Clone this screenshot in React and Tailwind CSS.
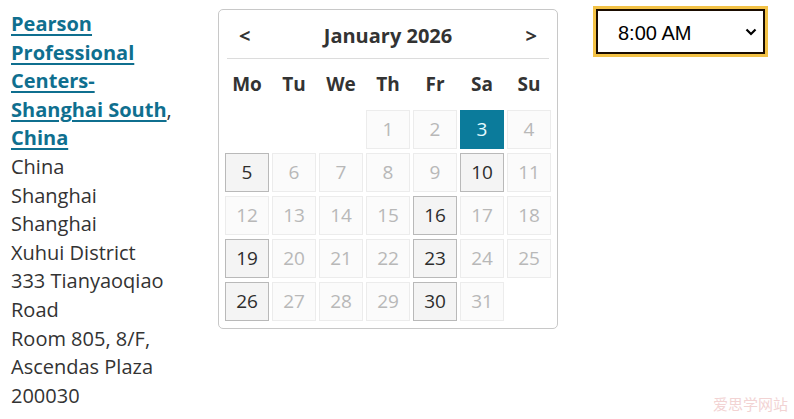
const ADDRESS = [
    'China',
    'Shanghai',
    'Shanghai',
    'Xuhui District',
    '333 Tianyaoqiao Road',
    'Room 805, 8/F, Ascendas Plaza',
    '200030',
];

const DAY_NAMES = ['Mo', 'Tu', 'We', 'Th', 'Fr', 'Sa', 'Su'];

// January 2026 starts on a Thursday -> 3 blank cells
const LEAD = 3;
const AVAILABLE = [5, 10, 16, 19, 23, 26, 30];
const SELECTED = 3;

function DayCell({ day }) {
    if (!day) return <div className="h-[39px]" />;
    if (day === SELECTED) {
        return (
            <div className="h-[39px] flex items-center justify-center bg-[#0b7b9b] text-[#e6fbff] border border-[#0b7b9b]">
                {day}
            </div>
        );
    }
    if (AVAILABLE.includes(day)) {
        return (
            <div className="h-[39px] flex items-center justify-center bg-[#f4f4f4] border border-[#b9b9b9] text-[#2d2d2d]">
                {day}
            </div>
        );
    }
    return (
        <div className="h-[39px] flex items-center justify-center bg-[#fbfbfb] border border-[#ececec] text-[#b8b8b8]">
            {day}
        </div>
    );
}

function Calendar() {
    const cells = [];
    for (let i = 0; i < LEAD; i++) cells.push(null);
    for (let d = 1; d <= 31; d++) cells.push(d);

    return (
        <div className="w-[340px] mt-[9px] rounded-[5px] border border-[#c8c8c8] px-[6px] pb-[7px] bg-white">
            {/* Header */}
            <div className="h-[49px] mx-[2px] flex items-center justify-between border-b border-[#dcdcdc] px-[12px] pt-[4px] text-[#333]">
                <span className="text-[20px] font-bold">&lt;</span>
                <span className="text-[20px] font-bold">January 2026</span>
                <span className="text-[20px] font-bold">&gt;</span>
            </div>

            <div className="grid grid-cols-7 gap-x-[3px] h-[51px] items-center text-[19px] font-bold text-[#333]">
                {DAY_NAMES.map((n) => (
                    <div key={n} className="text-center">{n}</div>
                ))}
            </div>

            <div className="grid grid-cols-7 gap-x-[3px] gap-y-[4px] text-[19px]">
                {cells.map((d, i) => (
                    <DayCell key={i} day={d} />
                ))}
            </div>
        </div>
    );
}

function TimeSelect() {
    return (
        <div className="mt-[6px] w-[175px] h-[51px] border-[3px] border-[#f3c246]">
            <div
                className="h-full flex items-center justify-between pl-[20px] pr-[6px] pt-[3px] border-2 border-[#1a0c00] bg-white text-[20px] text-black"
                style={{ fontFamily: '"Liberation Sans", Arial, sans-serif' }}
            >
                <span>8:00 AM</span>
                <svg width="12" height="8" viewBox="0 0 12 8" className="mb-[3px]">
                    <path d="M1.5 1.5 L6 6 L10.5 1.5" fill="none" stroke="#000" strokeWidth="2.2" />
                </svg>
            </div>
        </div>
    );
}

export default function App() {
    return (
        <div
            className="relative w-[794px] h-[419px] bg-white overflow-hidden flex"
            style={{ fontFamily: '"Open Sans", sans-serif' }}
        >
            <div className="w-[170px] shrink-0 ml-[11px] pt-[10px] text-[20px] leading-[28.6px] text-[#333]">
                <a href="#" className="font-bold text-[#0f6f8f] underline underline-offset-[3px]">
                    Pearson Professional Centers-Shanghai South
                </a>
                , <a href="#" className="font-bold text-[#0f6f8f] underline underline-offset-[3px]">China</a>
                {ADDRESS.map((line, i) => (
                    <div key={i}>{line}</div>
                ))}
            </div>

            <div className="ml-[37px]">
                <Calendar />
            </div>

            <div className="ml-[35px]">
                <TimeSelect />
            </div>

            <div
                className="absolute right-[6px] bottom-[4px] text-[15px] text-[#f2d3d3]"
                style={{ fontFamily: '"Noto Sans CJK SC", sans-serif' }}
            >
                爱思学网站
            </div>
        </div>
    );
}
